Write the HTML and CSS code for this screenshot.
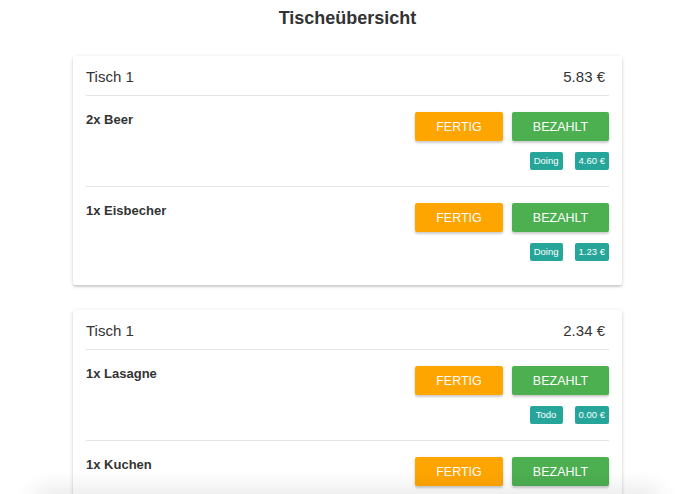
FILE: index.html
```html
<!DOCTYPE html>
<html>
<head>
    <title>Tischeübersicht</title>
    <link rel="stylesheet" href="styles.css">
</head>
<body>
    <h1>Tischeübersicht</h1>

    <div class="tables">
        <div class="card">
            <div class="card-head">
                <span>Tisch 1</span>
                <span>5.83 €</span>
            </div>
            <div class="item">
                <div class="item-name">2x Beer</div>
                <div class="item-side">
                    <div class="actions">
                        <button class="btn btn-done">FERTIG</button>
                        <button class="btn btn-paid">BEZAHLT</button>
                    </div>
                    <div class="badges">
                        <span class="badge">Doing</span>
                        <span class="badge">4.60 €</span>
                    </div>
                </div>
            </div>
            <div class="item">
                <div class="item-name">1x Eisbecher</div>
                <div class="item-side">
                    <div class="actions">
                        <button class="btn btn-done">FERTIG</button>
                        <button class="btn btn-paid">BEZAHLT</button>
                    </div>
                    <div class="badges">
                        <span class="badge">Doing</span>
                        <span class="badge">1.23 €</span>
                    </div>
                </div>
            </div>
        </div>

        <div class="card">
            <div class="card-head">
                <span>Tisch 1</span>
                <span>2.34 €</span>
            </div>
            <div class="item">
                <div class="item-name">1x Lasagne</div>
                <div class="item-side">
                    <div class="actions">
                        <button class="btn btn-done">FERTIG</button>
                        <button class="btn btn-paid">BEZAHLT</button>
                    </div>
                    <div class="badges">
                        <span class="badge">Todo</span>
                        <span class="badge">0.00 €</span>
                    </div>
                </div>
            </div>
            <div class="item">
                <div class="item-name">1x Kuchen</div>
                <div class="item-side">
                    <div class="actions">
                        <button class="btn btn-done">FERTIG</button>
                        <button class="btn btn-paid">BEZAHLT</button>
                    </div>
                    <div class="badges">
                        <span class="badge">Doing</span>
                        <span class="badge">1.11 €</span>
                    </div>
                </div>
            </div>
        </div>
    </div>

    <div class="bottom-fade"></div>
</body>
</html>
```

FILE: styles.css
```css
body {
    font-family: 'Liberation Sans', Arial, sans-serif;
    color: #333;
    background: #fff;
    margin: 0;
    padding: 0;
}
h1 {
    margin: 0;
    padding-top: 7px;
    height: 49px;
    text-align: center;
    font-size: 18px;
    line-height: 22px;
    font-weight: bold;
    color: #333;
}
.tables {
    width: 549px;
    margin-left: 73px;
}
.card {
    background: #fff;
    border-radius: 2px;
    box-shadow: 0 2px 2px rgba(0, 0, 0, 0.12), 0 1px 4px rgba(0, 0, 0, 0.14);
    padding: 0 13px 8px;
    margin-bottom: 25px;
}
.card-head {
    display: flex;
    justify-content: space-between;
    align-items: center;
    height: 38px;
    padding: 1px 4px 0 0;
    font-size: 15px;
    border-bottom: 1px solid #e4e4e4;
}
.item {
    display: flex;
    justify-content: space-between;
    padding: 16px 0 16px;
    border-bottom: 1px solid #e4e4e4;
}
.item:last-child {
    border-bottom: none;
}
.item-name {
    font-size: 13px;
    font-weight: bold;
}
.item-side {
    display: flex;
    flex-direction: column;
    align-items: flex-end;
}
.actions {
    display: flex;
    gap: 9px;
}
.btn {
    height: 29px;
    border: none;
    border-radius: 2px;
    color: #fff;
    font-family: 'Liberation Sans', Arial, sans-serif;
    font-size: 12.5px;
    padding: 0;
    box-shadow: 0 2px 2px rgba(0, 0, 0, 0.14), 0 1px 4px rgba(0, 0, 0, 0.1);
    cursor: pointer;
}
.btn-done {
    background: #ffa500;
    width: 88px;
}
.btn-paid {
    background: #4caf50;
    width: 97px;
}
.badges {
    display: flex;
    gap: 12px;
    margin-top: 11px;
}
.badge {
    display: inline-block;
    min-width: 25px;
    height: 18px;
    line-height: 18px;
    padding: 0 4px;
    text-align: center;
    background: #26a69a;
    color: #fff;
    font-size: 9.5px;
    border-radius: 2px;
}
.bottom-fade {
    position: fixed;
    left: 40px;
    right: 40px;
    bottom: -6px;
    height: 6px;
    box-shadow: 0 0 22px 4px rgba(0, 0, 0, 0.13);
}
```
